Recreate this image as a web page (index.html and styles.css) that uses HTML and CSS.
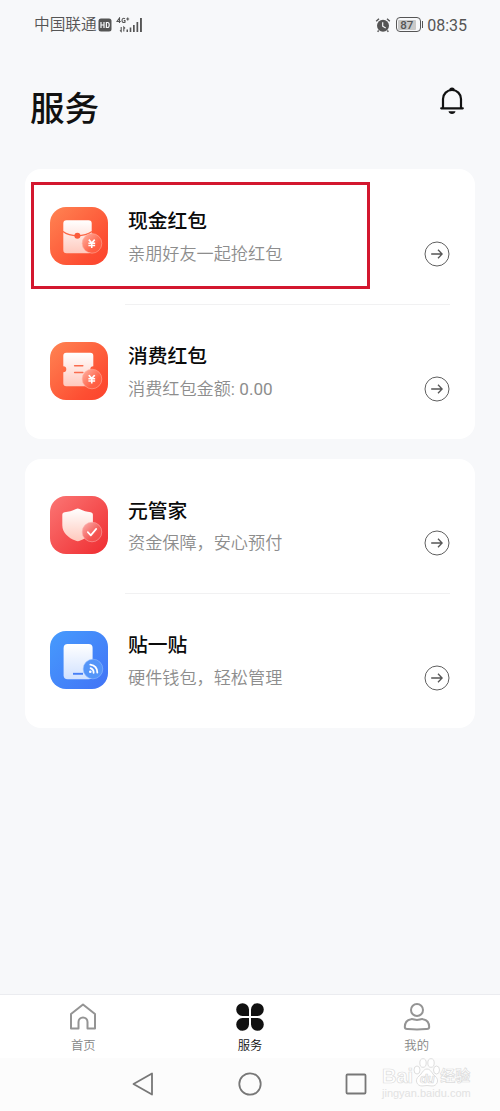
FILE: index.html
```html
<!DOCTYPE html>
<html lang="zh-CN">
<head>
<meta charset="utf-8">
<title>服务</title>
<link rel="stylesheet" href="styles.css">
</head>
<body>
<svg class="defs" width="0" height="0" aria-hidden="true">
  <defs>
    <linearGradient id="orange" x1="0" y1="0" x2="1" y2="1"><stop offset="0" stop-color="#ff8453"/><stop offset=".75" stop-color="#fd4e32"/><stop offset="1" stop-color="#fc432d"/></linearGradient>
    <linearGradient id="red" x1="0" y1="0" x2="1" y2="1"><stop offset="0" stop-color="#fb7674"/><stop offset="1" stop-color="#ef2c30"/></linearGradient>
    <linearGradient id="blue" x1="0" y1="0" x2="1" y2="1"><stop offset="0" stop-color="#469bfd"/><stop offset="1" stop-color="#4273f6"/></linearGradient>
    <linearGradient id="paper" x1="0" y1="0" x2="0" y2="1"><stop offset="0" stop-color="#fff"/><stop offset="1" stop-color="#ffc9bd"/></linearGradient>
    <linearGradient id="screen" x1="0" y1="0" x2="0" y2="1"><stop offset="0" stop-color="#fff"/><stop offset="1" stop-color="#d0e1ff"/></linearGradient>
    <linearGradient id="badge-orange" x1="0" y1="0" x2="1" y2="1"><stop offset="0" stop-color="#ffb5a6"/><stop offset=".65" stop-color="#ff6146"/><stop offset="1" stop-color="#ff573c"/></linearGradient>
    <linearGradient id="badge-red" x1="0" y1="0" x2="1" y2="1"><stop offset="0" stop-color="#fbb5b1"/><stop offset=".65" stop-color="#f45350"/><stop offset="1" stop-color="#f2484a"/></linearGradient>
    <symbol id="arrow" viewBox="0 0 26 26"><circle cx="13" cy="13" r="12" stroke-width=".95"/><path d="M7.2 13H18M14 8.8l4.1 4.2-4.1 4.2" stroke-width="1.3"/></symbol>
    <symbol id="yen" viewBox="0 0 8 9"><path d="M1.2.6L4 3.8 6.8.6M4 3.8v4.7M.8 4.1h6.4M.8 6.2h6.4" fill="none" stroke="#fff" stroke-width="1.5"/></symbol>
  </defs>
</svg>
<div class="screen">
  <div class="status">
    <span class="carrier">中国联通</span>
    <svg class="hd" width="14" height="14" viewBox="0 0 14 14"><rect x=".5" y=".5" width="13" height="13" rx="2.5" fill="#555"/><path d="M3 4v6M6 4v6M3 7h3M8.4 4.5v5h1.2q1.6 0 1.6-2.5T9.6 4.5z" fill="none" stroke="#f7f8fa" stroke-width="1.2"/></svg>
    <svg class="signal" width="27" height="16" viewBox="0 0 27 16"><g fill="none" stroke="#555" stroke-width="1.1"><path d="M3.500 6V1L1 4.500h3.800M9 1.700C7 .5 6 2 6 3.500s1 2.500 3 1.800V3.600H7.800M10.200 2h3M11.700.5v3M5.200 10v4.500L4 13.300M7.800 14.500V10l1.300 1.300"/></g><path d="M10.500 12.500h1.500V15h-1.500zM13.700 10.500h1.600V15h-1.600zM17 8h1.700v7H17zM20.500 5h1.700v10h-1.700zM24 1h1.900v14H24z" fill="#555"/></svg>
    <svg class="alarm" width="16" height="16" viewBox="0 0 16 16"><circle cx="8" cy="8.800" r="6" fill="#555"/><path d="M1.200 4.200L4 1.700M14.800 4.200L12 1.700M3.700 13.500l-1.100 1.300M12.300 13.500l1.100 1.300" stroke="#555" stroke-width="1.400"/><path d="M7.700 5.200v4l3 1.700" fill="none" stroke="#f7f8fa" stroke-width="1.200"/></svg>
    <span class="battery"><span class="level">87</span></span><span class="battery-tip"></span>
    <span class="clock">08:35</span>
  </div>
  <header class="header">
    <h1>服务</h1>
    <svg class="bell" width="28" height="30" viewBox="0 0 28 30"><path d="M5 21V12a9 9 0 0 1 18 0v9" fill="none" stroke="#111" stroke-width="2.200"/><path d="M3.200 21.300h21.600" stroke="#111" stroke-width="2.200" stroke-linecap="round"/><path d="M11.200 3.200a2.800 2.800 0 0 1 5.600 0zM10.500 24.300h7a3.600 3.600 0 0 1-7 0z" fill="#111"/></svg>
  </header>
  <main class="cards">
    <section class="card">
      <article class="row">
        <svg class="icon" viewBox="0 0 58 58"><rect width="58" height="58" rx="16" fill="url(#orange)"/><rect x="13.300" y="13.300" width="28.400" height="33" rx="3.200" fill="url(#paper)"/><path d="M13 24.600q5.500 4.200 14.300 4.200T42 24.600" fill="none" stroke="#fc6746" stroke-width="1.200"/><circle cx="27.400" cy="28.800" r="3" fill="#fb5b3b"/><circle cx="42" cy="36.400" r="9.800" fill="url(#badge-orange)" stroke="#ffad9c" stroke-width=".6"/><use href="#yen" x="37.500" y="32" width="8.500" height="9.500"/></svg>
        <div class="copy"><h2>现金红包</h2><p>亲朋好友一起抢红包</p></div>
        <svg class="go"><use href="#arrow"/></svg>
        <div class="highlight"></div>
      </article>
      <article class="row">
        <svg class="icon" viewBox="0 0 58 58"><rect width="58" height="58" rx="16" fill="url(#orange)"/><path d="M16.300 10.800h24a3 3 0 0 1 3 3v10.500a3 3 0 0 0 0 6v11a3 3 0 0 1-3 3h-24a3 3 0 0 1-3-3v-11a3 3 0 0 0 0-6V13.800a3 3 0 0 1 3-3z" fill="url(#paper)"/><path d="M24.600 23.800h8.200M24.600 30.600h8.200" stroke="#fa6b4d" stroke-width="1.500" stroke-linecap="round"/><circle cx="42" cy="37" r="9.800" fill="url(#badge-orange)" stroke="#ffad9c" stroke-width=".6"/><use href="#yen" x="37.500" y="32.500" width="8.500" height="9.500"/></svg>
        <div class="copy"><h2>消费红包</h2><p>消费红包金额<span class="amount">: 0.00</span></p></div>
        <svg class="go"><use href="#arrow"/></svg>
      </article>
    </section>
    <section class="card">
      <article class="row">
        <svg class="icon" viewBox="0 0 58 58"><rect width="58" height="58" rx="16" fill="url(#red)"/><path d="M26 13.100q1.800-1 3.600 0c4 2.100 7 2.800 11.100 3.100q2.200.2 2.200 2.300v10.700c0 8-6 12.500-12.600 15.400q-2.500 1.100-5 0C18.600 41.700 12.300 37.200 12.300 29.200V18.500q0-2.100 2.200-2.300C18.800 15.800 22 15.200 26 13.100z" fill="url(#paper)"/><circle cx="42" cy="36" r="9.800" fill="url(#badge-red)" stroke="#fba9a7" stroke-width=".6"/><path d="M37.800 36.200l3 3.200 5.400-6.500" fill="none" stroke="#fff" stroke-width="1.700" stroke-linecap="round" stroke-linejoin="round"/></svg>
        <div class="copy"><h2>元管家</h2><p>资金保障，安心预付</p></div>
        <svg class="go"><use href="#arrow"/></svg>
      </article>
      <article class="row">
        <svg class="icon" viewBox="0 0 58 58"><rect width="58" height="58" rx="16" fill="url(#blue)"/><rect x="13.600" y="13" width="29" height="35.300" rx="4" fill="url(#screen)"/><path d="M23 42.800h10" stroke="#467ff6" stroke-width="1.900"/><circle cx="43" cy="38" r="9.800" fill="#5495f8" stroke="#91baff" stroke-width=".6"/><g fill="none" stroke="#fff" stroke-width="1.800" stroke-linecap="round"><path d="M40.600 37.200q3.300 1.300 3 4.700M40.300 33.700q6.900 1.200 7 7.800"/></g><circle cx="40.300" cy="40.800" r="1.300" fill="#fff"/></svg>
        <div class="copy"><h2>贴一贴</h2><p>硬件钱包，轻松管理</p></div>
        <svg class="go"><use href="#arrow"/></svg>
      </article>
    </section>
  </main>
  <nav class="tabs">
    <div class="tab"><svg width="30" height="30" viewBox="0 0 30 30"><path d="M3 26.500V12L15 2.500 27 12v14.500h-7.500V20a3.500 3.500 0 0 0-9 0v6.500z" fill="none" stroke="#949494" stroke-width="2" stroke-linejoin="round"/></svg><span>首页</span></div>
    <div class="tab active"><svg width="30" height="30" viewBox="0 0 30 30" fill="#111"><path id="petal" d="M14 14V7.400A6.400 6.400 0 1 0 7.400 14z"/><use href="#petal" transform="rotate(90 15 15)"/><use href="#petal" transform="rotate(180 15 15)"/><use href="#petal" transform="rotate(270 15 15)"/></svg><span>服务</span></div>
    <div class="tab"><svg width="30" height="30" viewBox="0 0 30 30"><g fill="none" stroke="#949494" stroke-width="2"><circle cx="15" cy="8" r="6"/><path d="M9 17.200c2.200-.5 3.500.7 6 .7s3.800-1.200 6-.7c4.500.8 6.200 4.100 6.200 7.800 0 2.400-1.500 2-3.200 2.100q-9 .8-18 0C4.300 27 2.800 27.400 2.800 25c0-3.700 1.700-7 6.200-7.800z"/></g></svg><span>我的</span></div>
  </nav>
  <footer class="system">
    <svg width="22" height="26" viewBox="0 0 22 26"><path d="M20 2.500v21L1.500 13z"/></svg>
    <svg width="26" height="26" viewBox="0 0 26 26"><circle cx="13" cy="13" r="10.700"/></svg>
    <svg width="22" height="26" viewBox="0 0 22 26"><rect x="1.500" y="3.500" width="19" height="19" rx="1"/></svg>
    <div class="watermark">
      <div class="brand"><span class="bai">Bai</span><svg width="27" height="29" viewBox="0 0 27 29"><g fill="#fff" stroke="#dedede"><ellipse cx="4" cy="12" rx="3" ry="4"/><ellipse cx="10" cy="5" rx="3.200" ry="4.300"/><ellipse cx="18" cy="5" rx="3.200" ry="4.300"/><ellipse cx="23.500" cy="12" rx="3" ry="4"/><path d="M14 11c4 0 5 5 8 7 5 4 2 10-3 10q-5-1-10 0c-5 0-8-6-3-10 3-2 4-7 8-7z"/></g><text x="7" y="25" class="du">du</text></svg><span class="jy">经验</span></div>
      <div class="domain">jingyan.baidu.com</div>
    </div>
  </footer>
</div>
</body>
</html>
```

FILE: styles.css
```css
* { box-sizing: border-box; }
body { margin: 0; background: #f7f8fa; font-family: Roboto, "Noto Sans CJK SC", sans-serif; }
h1, h2, p { margin: 0; }
svg { display: block; flex: none; }
.defs { position: absolute; }
.screen { width: 500px; height: 1111px; display: flex; flex-direction: column; overflow: hidden; }

.status { height: 49px; padding: 0 33px 0 34px; display: flex; align-items: center; color: #555; }
.carrier { font-size: 15.7px; font-weight: 350; line-height: 24px; width: 63px; padding-top: 1px; white-space: nowrap; }
.hd { margin-left: 1px; }
.signal { margin-left: 4px; }
.alarm { margin-left: auto; }
.battery { width: 25px; height: 15px; margin-left: 5px; padding: 1.5px; border: 1.3px solid #555; border-radius: 4px; }
.level { display: block; height: 100%; width: 18px; padding-left: 2px; background: #c9c9c9; border-radius: 1px; font-size: 11.5px; line-height: 10px; font-weight: 500; }
.battery-tip { width: 1.5px; height: 7px; margin-left: 1px; background: #555; }
.clock { margin-left: 4px; font-size: 16px; padding-top: 1px; }

.header { height: 120px; padding: 34px 34px 0 30px; display: flex; align-items: flex-start; justify-content: space-between; }
.header h1 { margin-top: 1px; font-size: 34.6px; line-height: 50px; font-weight: 500; color: #111; }
.bell { margin-top: 4px; }

.cards { padding: 0 25px; display: flex; flex-direction: column; gap: 20px; }
.card { background: #fff; border-radius: 16px; padding: 0 25px; }
.row { position: relative; height: 135px; display: flex; align-items: flex-start; }
.card + .card .row { height: 134.7px; }
.row + .row::before { content: ""; position: absolute; top: 0; left: 75px; right: 0; height: 1px; background: #f1f1f2; }
.icon { width: 58px; height: 58px; margin-top: 38px; }
.card + .card .icon { margin-top: 37.3px; }
.card + .card .row + .row::before { top: -.7px; }
.copy { flex: 1; padding: 38px 0 0 20px; }
.copy h2 { font-size: 19.8px; line-height: 30px; font-weight: 500; color: #0a0a0a; }
.copy p { margin-top: 4px; font-size: 17.15px; line-height: 27px; font-weight: 350; color: #8d8d8d; white-space: nowrap; }
.card + .card .copy { padding-top: 37.6px; }
.card + .card .copy p { margin-top: 3.4px; }
.amount { font-weight: 400; }
.go { width: 26px; height: 26px; margin: 71.5px 0 0; fill: none; stroke: #565656; }
.card + .card .go { margin-top: 71px; }
.highlight { position: absolute; top: 13px; left: -19px; width: 339px; height: 107px; border: 3px solid #d3172f; }

.tabs { margin-top: auto; height: 64px; padding-top: 7px; background: #fff; border-top: 1px solid #ebecf0; display: grid; grid-template-columns: repeat(3, 1fr); }
.tab { display: flex; flex-direction: column; align-items: center; color: #858585; font-size: 12.3px; line-height: 18px; font-weight: 350; }
.tab span { margin-top: 5px; }
.tab.active { color: #111; }

.system { position: relative; height: 53px; padding: 13px 133px 0 132px; background: #fcfcfc; display: flex; align-items: flex-start; justify-content: space-between; fill: none; stroke: #777; stroke-width: 1.8; stroke-linejoin: round; }
.watermark { position: absolute; left: 382px; top: -1px; stroke-width: 1; }
.brand { height: 30px; display: flex; align-items: flex-end; font-family: "Liberation Sans", "Noto Sans CJK SC", sans-serif; font-weight: 700; color: #fff; -webkit-text-stroke: .7px #dcdcdc; }
.bai { font-size: 20px; line-height: 22px; }
.du { font: italic 700 12px "Liberation Sans", sans-serif; fill: #fff; stroke: #d8d8d8; stroke-width: .7px; }
.jy { font-size: 15px; line-height: 23px; }
.domain { font: 11px/13px "Liberation Sans", sans-serif; color: #e2e2e2; }
```
